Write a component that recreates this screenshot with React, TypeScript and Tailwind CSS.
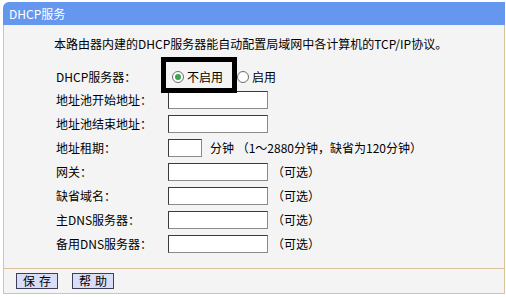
const FONT = '"Noto Sans CJK SC", "Liberation Sans", sans-serif'

const ROWS: { label: string; kind: 'ip' | 'lease' | 'optional' }[] = [
  { label: '地址池开始地址：', kind: 'ip' },
  { label: '地址池结束地址：', kind: 'ip' },
  { label: '地址租期：', kind: 'lease' },
  { label: '网关：', kind: 'optional' },
  { label: '缺省域名：', kind: 'optional' },
  { label: '主DNS服务器：', kind: 'optional' },
  { label: '备用DNS服务器：', kind: 'optional' },
]

function Radio({ checked }: { checked?: boolean }) {
  return (
    <span className="flex h-[12px] w-[12px] items-center justify-center rounded-full border border-[#6d6d6d] bg-white">
      {checked && <span className="h-[6px] w-[6px] rounded-full bg-[#3fa34d]" />}
    </span>
  )
}

function TextBox({ width = 'w-[100px]' }: { width?: string }) {
  return <div className={`h-[18px] ${width} border border-[#3b3b3b] border-r-[#8a8a8a] border-b-[#8a8a8a] bg-white`} />
}

export default function App() {
  return (
    <div className="h-[297px] w-[506px] bg-white pl-[3px] pt-[2px] text-[12px] leading-[16px] text-black" style={{ fontFamily: FONT }}>
      <div className="relative w-[502px]">
        <div className="flex h-[23px] items-center rounded-tl-[6px] bg-[#6597ee] pl-[6px] text-white">DHCP服务</div>

        <div className="border-x border-b border-[#dcc29c] bg-[#f4f4f4]">
          <div className="pl-[50px] pt-[11px]">本路由器内建的DHCP服务器能自动配置局域网中各计算机的TCP/IP协议。</div>

          <div className="mt-[13px] pb-[12px] pl-[52px]">
            <div className="flex h-[23px] items-center">
              <div className="w-[112px]">DHCP服务器：</div>
              <div className="ml-[4px] flex items-center gap-[3px]">
                <Radio checked />
                <span>不启用</span>
              </div>
              <div className="ml-[14px] flex items-center gap-[3px]">
                <Radio />
                <span>启用</span>
              </div>
            </div>

            {ROWS.map((row) => (
              <div key={row.label} className="flex h-[24px] items-center">
                <div className="w-[112px]">{row.label}</div>
                {row.kind === 'lease' ? (
                  <>
                    <TextBox width="w-[34px]" />
                    <span className="ml-[8px]">分钟 （1～2880分钟，缺省为120分钟）</span>
                  </>
                ) : (
                  <>
                    <TextBox />
                    {row.kind === 'optional' && <span className="ml-[4px]">（可选）</span>}
                  </>
                )}
              </div>
            ))}
          </div>

          <div className="flex h-[25px] items-start gap-[14px] border-t border-[#dcc29c] pl-[12px] pt-[4px]">
            <button className="flex h-[16px] w-[42px] items-center justify-center border border-[#3c3f5a] bg-[#d9ddf7] tracking-[4px] indent-[4px]">保存</button>
            <button className="flex h-[16px] w-[42px] items-center justify-center border border-[#3c3f5a] bg-[#d9ddf7] tracking-[4px] indent-[4px]">帮助</button>
          </div>
        </div>

        <div className="pointer-events-none absolute left-[158px] top-[55px] h-[36px] w-[76px] border-[5px] border-black" />
      </div>
    </div>
  )
}
